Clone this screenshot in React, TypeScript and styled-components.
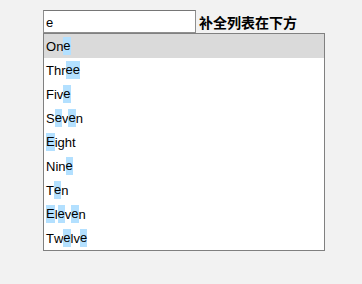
import React, { useState } from 'react'
import styled, { createGlobalStyle } from 'styled-components'

const GlobalStyle = createGlobalStyle`
  html, body {
    margin: 0;
    padding: 0;
    background: #f2f2f2;
  }
  body {
    font-family: "Liberation Sans", Arial, sans-serif;
  }
`

const Page = styled.div`
  padding: 10px 0 0 43px;
`

const SearchBar = styled.div`
  display: flex;
  align-items: center;
  height: 23px;
`

const SearchInput = styled.input`
  box-sizing: border-box;
  width: 153px;
  height: 23px;
  margin: 0;
  padding: 1px 2px 0;
  border: 1px solid #8f8f8f;
  border-top-color: #767676;
  background: #fff;
  font-family: "Liberation Sans", Arial, sans-serif;
  font-size: 13px;
  color: #000;
  outline: none;
`

const Hint = styled.span`
  margin-left: 3px;
  font-family: "Noto Sans CJK SC", "Liberation Sans", sans-serif;
  font-weight: bold;
  font-size: 14px;
  color: #000;
`

const List = styled.ul`
  box-sizing: border-box;
  width: 282px;
  margin: 0;
  padding: 0;
  list-style: none;
  border: 1px solid #808080;
  background: #fff;
`

const Row = styled.li<{ $active?: boolean }>`
  height: 24px;
  display: flex;
  align-items: center;
  padding-left: 2px;
  font-size: 13px;
  color: #000;
  background: ${({ $active }) => ($active ? '#dadada' : '#fff')};
`

const Match = styled.span`
  background: #b3e0ff;
  line-height: 18px;
`

const options = ['One', 'Three', 'Five', 'Seven', 'Eight', 'Nine', 'Ten', 'Eleven', 'Twelve']

function highlight(word: string, q: string) {
  if (!q) return word
  return word.split('').map((ch, i) =>
    ch.toLowerCase() === q.toLowerCase() ? <Match key={i}>{ch}</Match> : <span key={i}>{ch}</span>
  )
}

export default function App() {
  const [query, setQuery] = useState('e')
  const items = options.filter((o) => o.toLowerCase().includes(query.toLowerCase()))

  return (
    <Page>
      <GlobalStyle />
      <SearchBar>
        <SearchInput value={query} onChange={(e) => setQuery(e.target.value)} />
        <Hint>补全列表在下方</Hint>
      </SearchBar>
      <List>
        {items.map((o, i) => (
          <Row key={o} $active={i === 0}>
            {highlight(o, query)}
          </Row>
        ))}
      </List>
    </Page>
  )
}
